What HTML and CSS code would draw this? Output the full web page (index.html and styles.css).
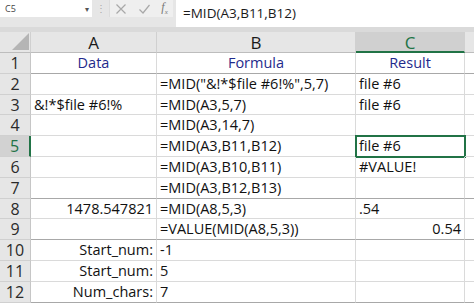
FILE: index.html
```html
<!DOCTYPE html>
<html>
<head>
<meta charset="utf-8">
<link rel="stylesheet" href="styles.css">
</head>
<body>
<div class="topbar">
  <div class="namebox"><span class="name">C5</span><span class="drop">▾</span></div>
  <div class="sep">⋮</div>
  <div class="icons">
    <svg class="ic" width="12" height="12" viewBox="0 0 12 12"><path d="M1.5 1.5 L10.5 10.5 M10.5 1.5 L1.5 10.5" stroke="#a8a8a8" stroke-width="1.2" fill="none"/></svg>
    <svg class="ic" width="13" height="12" viewBox="0 0 13 12"><path d="M1.5 6.5 L5 10 L11.5 2" stroke="#a8a8a8" stroke-width="1.2" fill="none"/></svg>
    <span class="fx">f<sub>x</sub></span>
  </div>
  <div class="formula">=MID(A3,B11,B12)</div>
</div>
<div class="band"></div>
<div class="grid">
  <div class="corner"><svg width="17" height="17" viewBox="0 0 17 17"><path d="M17 0 L17 17 L0 17 Z" fill="#b5b5b5"/></svg></div>
  <div class="ch">A</div>
  <div class="ch">B</div>
  <div class="ch sel">C</div>
  <div class="ch last"></div>

  <div class="rh">1</div><div class="c ctr blue b1">Data</div><div class="c ctr blue b1">Formula</div><div class="c ctr blue b1">Result</div><div class="c last b1"></div>
  <div class="rh">2</div><div class="c"></div><div class="c">=MID("&amp;!*$file #6!%",5,7)</div><div class="c">file #6</div><div class="c last"></div>
  <div class="rh">3</div><div class="c">&amp;!*$file #6!%</div><div class="c">=MID(A3,5,7)</div><div class="c">file #6</div><div class="c last"></div>
  <div class="rh">4</div><div class="c"></div><div class="c">=MID(A3,14,7)</div><div class="c"></div><div class="c last"></div>
  <div class="rh rsel">5</div><div class="c"></div><div class="c">=MID(A3,B11,B12)</div><div class="c active">file #6</div><div class="c last"></div>
  <div class="rh">6</div><div class="c"></div><div class="c">=MID(A3,B10,B11)</div><div class="c">#VALUE!</div><div class="c last"></div>
  <div class="rh">7</div><div class="c b1"></div><div class="c b1">=MID(A3,B12,B13)</div><div class="c b1"></div><div class="c last b1"></div>
  <div class="rh">8</div><div class="c rt">1478.547821</div><div class="c">=MID(A8,5,3)</div><div class="c">.54</div><div class="c last"></div>
  <div class="rh">9</div><div class="c b1"></div><div class="c b1">=VALUE(MID(A8,5,3))</div><div class="c rt b1">0.54</div><div class="c last b1"></div>
  <div class="rh">10</div><div class="c rt">Start_num:</div><div class="c">-1</div><div class="c"></div><div class="c last"></div>
  <div class="rh">11</div><div class="c rt">Start_num:</div><div class="c">5</div><div class="c"></div><div class="c last"></div>
  <div class="rh">12</div><div class="c rt b1">Num_chars:</div><div class="c b1">7</div><div class="c b1"></div><div class="c last b1"></div>
</div>
</body>
</html>
```
FILE: styles.css
```css
html, body {
  margin: 0;
  padding: 0;
  background: #ffffff;
  width: 474px;
  height: 306px;
  overflow: hidden;
  font-family: "Open Sans", "Liberation Sans", sans-serif;
}
.topbar {
  height: 27px;
  background: #e6e6e6;
  display: flex;
  align-items: flex-start;
}
.namebox {
  width: 92px;
  height: 17px;
  background: #ffffff;
  display: flex;
  align-items: center;
  justify-content: space-between;
  box-sizing: border-box;
  padding: 0 3px 0 5px;
}
.name {
  font-size: 9px;
  color: #444;
}
.drop {
  font-size: 8px;
  color: #555;
}
.sep {
  width: 17px;
  text-align: center;
  font-size: 10px;
  color: #aaa;
  line-height: 17px;
}
.icons {
  width: 64px;
  height: 17px;
  background: #efefef;
  display: flex;
  align-items: center;
  justify-content: space-around;
  box-sizing: border-box;
  border-left: 1px solid #dcdcdc;
}
.fx {
  font-family: "Liberation Serif", serif;
  font-style: italic;
  font-size: 12px;
  color: #777;
}
.fx sub {
  font-size: 7px;
}
.formula {
  flex: 1;
  height: 27px;
  background: #ffffff;
  margin-left: 3px;
  box-sizing: border-box;
  padding: 4px 0 0 7px;
  font-size: 13.5px;
  color: #1a1a1a;
}
.band {
  height: 5px;
  background: #dadada;
}
.grid {
  display: grid;
  grid-template-columns: 31px 126px 199px 109px 1fr;
  grid-template-rows: 21px repeat(12, 20.8px);
}
.corner {
  background: #e6e6e6;
  border-right: 1px solid #d0d0d0;
  border-bottom: 1px solid #bdbdbd;
  display: flex;
  align-items: flex-end;
  justify-content: flex-end;
  padding: 0 1px 2px 0;
  box-sizing: border-box;
}
.ch {
  background: #e6e6e6;
  border-right: 1px solid #d0d0d0;
  border-bottom: 1px solid #bdbdbd;
  box-sizing: border-box;
  text-align: center;
  font-size: 17px;
  line-height: 21px;
  color: #1a1a1a;
}
.ch.sel {
  background: #d0d0d0;
  color: #217346;
  border-bottom: 2px solid #217346;
}
.ch.last {
  border-right: none;
}
.rh {
  background: #e6e6e6;
  border-right: 1px solid #c6c6c6;
  border-bottom: 1px solid #d0d0d0;
  box-sizing: border-box;
  text-align: center;
  font-size: 16px;
  line-height: 20px;
  color: #2a2a2a;
}
.rh.rsel {
  background: #d2d2d2;
  color: #217346;
  border-right: 2px solid #217346;
}
.c {
  border-right: 1px solid #dadada;
  border-bottom: 1px solid #dadada;
  box-sizing: border-box;
  font-size: 14.5px;
  line-height: 20px;
  color: #111;
  padding: 0 3px 0 3px;
  white-space: nowrap;
  overflow: visible;
}
.c.b1 {
  border-bottom: 1px solid #a8a8a8;
}
.c.last {
  border-right: none;
}
.ctr {
  text-align: center;
}
.rt {
  text-align: right;
}
.blue {
  color: #1f2a8c;
}
.active {
  outline: 2px solid #217346;
  outline-offset: -1px;
}
```
